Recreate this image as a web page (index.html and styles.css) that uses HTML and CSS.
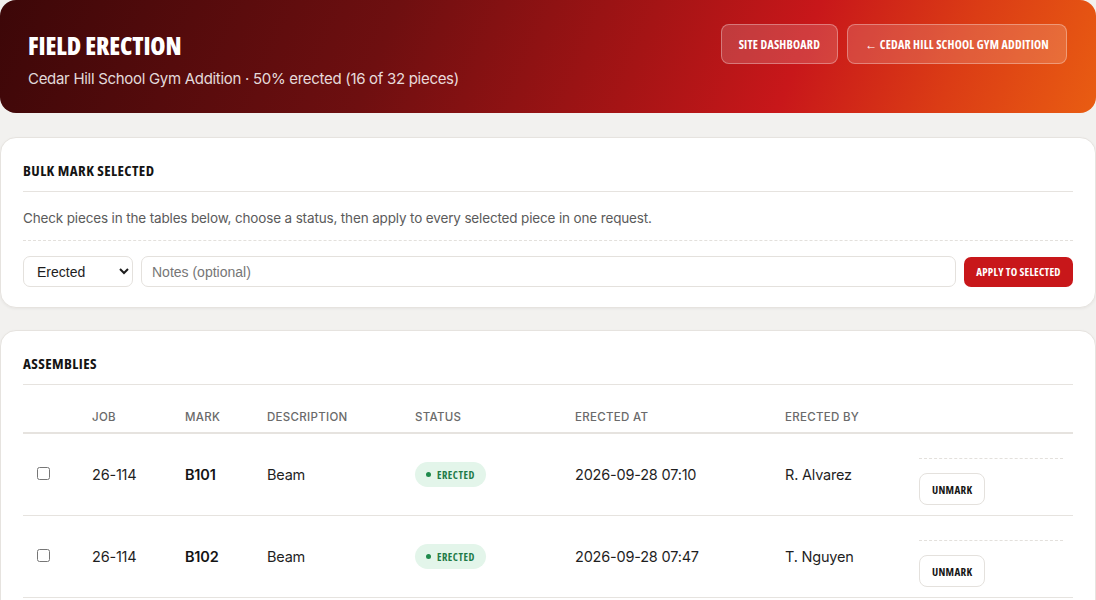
FILE: index.html
```html
<!DOCTYPE html>
<html lang="en">
<head>
<meta charset="utf-8">
<title>Field Erection</title>
<link rel="stylesheet" href="styles.css">
</head>
<body>
<header class="hero">
  <div class="hero-text">
    <h1 class="hero-title">FIELD ERECTION</h1>
    <p class="hero-sub">Cedar Hill School Gym Addition · 50% erected (16 of 32 pieces)</p>
  </div>
  <nav class="hero-actions">
    <a class="ghost-btn" href="#">SITE DASHBOARD</a>
    <a class="ghost-btn" href="#">← CEDAR HILL SCHOOL GYM ADDITION</a>
  </nav>
</header>

<section class="card">
  <h2 class="card-title">BULK MARK SELECTED</h2>
  <p class="card-note">Check pieces in the tables below, choose a status, then apply to every selected piece in one request.</p>
  <form class="bulk-row">
    <select class="field select">
      <option>Erected</option>
      <option>Not erected</option>
    </select>
    <input class="field notes" type="text" placeholder="Notes (optional)">
    <button class="primary-btn" type="button">APPLY TO SELECTED</button>
  </form>
</section>

<section class="card">
  <h2 class="card-title">ASSEMBLIES</h2>
  <table class="grid">
    <colgroup>
      <col class="c-check"><col class="c-job"><col class="c-mark"><col class="c-desc"><col class="c-status"><col class="c-at"><col class="c-by"><col class="c-act">
    </colgroup>
    <thead>
      <tr>
        <th></th><th>JOB</th><th>MARK</th><th>DESCRIPTION</th><th>STATUS</th><th>ERECTED AT</th><th>ERECTED BY</th><th></th>
      </tr>
    </thead>
    <tbody>
      <tr>
        <td class="chk"><input type="checkbox"></td>
        <td>26-114</td>
        <td class="mark">B101</td>
        <td>Beam</td>
        <td><span class="pill"><span class="dot"></span>ERECTED</span></td>
        <td>2026-09-28 07:10</td>
        <td>R. Alvarez</td>
        <td class="act"><div class="act-form"><button class="outline-btn" type="button">UNMARK</button></div></td>
      </tr>
      <tr>
        <td class="chk"><input type="checkbox"></td>
        <td>26-114</td>
        <td class="mark">B102</td>
        <td>Beam</td>
        <td><span class="pill"><span class="dot"></span>ERECTED</span></td>
        <td>2026-09-28 07:47</td>
        <td>T. Nguyen</td>
        <td class="act"><div class="act-form"><button class="outline-btn" type="button">UNMARK</button></div></td>
      </tr>
    </tbody>
  </table>
</section>
</body>
</html>
```

FILE: styles.css
```css
* { box-sizing: border-box; }

body {
  margin: 0;
  background: #f2f1ef;
  font-family: Inter, "Noto Sans", sans-serif;
  color: #1d1d1d;
}

.hero {
  display: flex;
  justify-content: space-between;
  align-items: flex-start;
  padding: 24px 29px 23px 28px;
  border-radius: 16px;
  background: linear-gradient(112deg, #3c0708 0%, #6e0f10 35%, #a51415 58%, #c8171a 72%, #db3c15 86%, #e95d12 100%);
  margin-bottom: 24px;
  color: #fff;
}

.hero-text { padding-top: 6px; }

.hero-title {
  margin: 0;
  font-family: "Open Sans", Roboto, sans-serif;
  font-stretch: 75%;
  font-weight: 800;
  font-size: 24.5px;
  line-height: 32px;
  letter-spacing: -0.1px;
}

.hero-sub {
  margin: 6px 0 0;
  font-size: 15px;
  letter-spacing: -0.3px;
  line-height: 22px;
  color: rgba(255, 255, 255, 0.86);
}

.hero-actions {
  display: flex;
  gap: 9px;
}

.ghost-btn {
  display: inline-flex;
  align-items: center;
  height: 40px;
  padding: 0 17px;
  border: 1px solid rgba(255, 255, 255, 0.32);
  border-radius: 8px;
  background: rgba(255, 255, 255, 0.16);
  color: #fff;
  text-decoration: none;
  font-family: "Open Sans", Roboto, sans-serif;
  font-stretch: 75%;
  font-weight: 700;
  font-size: 12px;
  letter-spacing: 0.2px;
  white-space: nowrap;
}

.card {
  background: #fff;
  border: 1px solid #e6e3df;
  border-radius: 16px;
  padding: 22px 22px 20px;
  margin-bottom: 22px;
  box-shadow: 0 1px 3px rgba(0, 0, 0, 0.05);
}

.card-title {
  margin: 0;
  padding-bottom: 11px;
  border-bottom: 1px solid #e6e3df;
  font-family: "Open Sans", Roboto, sans-serif;
  font-stretch: 75%;
  font-weight: 700;
  font-size: 15px;
  line-height: 20px;
  letter-spacing: 0.4px;
  color: #141414;
}

.card-note {
  margin: 16px 0 0;
  padding-bottom: 12px;
  border-bottom: 1px dashed #e3e0dc;
  font-size: 13.5px;
  letter-spacing: -0.15px;
  line-height: 20px;
  color: #5b5b5b;
}

.bulk-row {
  display: flex;
  gap: 8px;
  margin-top: 15px;
  align-items: center;
}

.field {
  height: 31px;
  border: 1px solid #e4e1dd;
  border-radius: 7px;
  background: #fff;
  font-family: "Liberation Sans", Arial, sans-serif;
  font-size: 14px;
  color: #1d1d1d;
}

.select {
  width: 110px;
  padding: 0 6px 0 9px;
}

.notes {
  flex: 1;
  padding: 0 10px;
}

.notes::placeholder { color: #767676; }

.primary-btn {
  height: 30px;
  width: 109px;
  border: 0;
  border-radius: 7px;
  background: #c8171a;
  color: #fff;
  font-family: "Open Sans", Roboto, sans-serif;
  font-stretch: 75%;
  font-weight: 700;
  font-size: 11px;
  letter-spacing: 0.2px;
  white-space: nowrap;
}

.grid {
  width: 100%;
  margin-top: 16px;
  border-collapse: collapse;
  table-layout: fixed;
}

.c-check { width: 55px; }
.c-job { width: 93px; }
.c-mark { width: 82px; }
.c-desc { width: 148px; }
.c-status { width: 160px; }
.c-at { width: 210px; }
.c-by { width: 134px; }
.c-act { width: 168px; }

.grid th {
  text-align: left;
  padding: 8px 14px 7px;
  font-size: 11.5px;
  line-height: 16px;
  font-weight: 500;
  letter-spacing: 0.3px;
  color: #6a6a6a;
  border-bottom: 2px solid #e6e3df;
}

.grid td {
  padding: 10px 14px;
  font-size: 14.5px;
  letter-spacing: -0.2px;
  line-height: 20px;
  color: #1f1f1f;
  border-bottom: 1px solid #e6e3df;
  vertical-align: middle;
}

.grid .chk input {
  margin: 0;
  width: 13px;
  height: 13px;
}

.grid .mark { font-weight: 600; color: #141414; }

.pill {
  display: inline-flex;
  align-items: center;
  gap: 6px;
  height: 25px;
  padding: 0 11px 0 11px;
  border-radius: 999px;
  background: #e3f5ea;
  color: #1e7a47;
  font-family: "Open Sans", Roboto, sans-serif;
  font-stretch: 75%;
  font-weight: 700;
  font-size: 10.5px;
  letter-spacing: 0.5px;
}

.dot {
  width: 5px;
  height: 5px;
  border-radius: 50%;
  background: #1f8a4c;
}

.grid td.act { padding-right: 10px; }

.act-form {
  margin-top: 14px;
  padding-top: 14px;
  border-top: 1px dashed #e3e0dc;
}

.outline-btn {
  height: 32px;
  padding: 0 12px;
  border: 1px solid #e4e1dd;
  border-radius: 8px;
  background: #fff;
  color: #161616;
  font-family: "Open Sans", Roboto, sans-serif;
  font-stretch: 75%;
  font-weight: 700;
  font-size: 11px;
  letter-spacing: 0.3px;
}
```
